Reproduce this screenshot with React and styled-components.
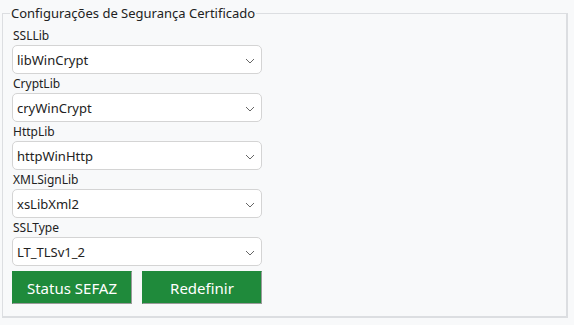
import React from 'react';
import styled, { createGlobalStyle } from 'styled-components';

const GlobalStyle = createGlobalStyle`
  html, body {
    margin: 0;
    padding: 0;
    background: #f8f9fa;
    font-family: "Noto Sans", "Open Sans", sans-serif;
  }
`

const Page = styled.div`
  padding: 6px 6px 0 2px;
  width: 574px;
  height: 325px;
  box-sizing: border-box;
`

const Group = styled.fieldset`
  margin: 0;
  padding: 5px 9px 13px 9px;
  height: 312px;
  box-sizing: border-box;
  border: 1px solid #dcdee1;
  border-right-width: 2px;
  border-bottom-width: 2px;
  background: #f8f9fa;
`

const Legend = styled.legend`
  padding: 0 1px;
  margin-left: -2px;
  font-size: 13px;
  line-height: 15px;
  color: #222;
`

const Field = styled.div`
  width: 250px;
  display: flex;
  flex-direction: column;
`

const Label = styled.label`
  font-size: 12px;
  line-height: 19px;
  height: 19px;
  color: #222;
  padding-left: 1px;
`

const SelectBox = styled.div`
  height: 29px;
  box-sizing: border-box;
  border: 1px solid #d4d4d4;
  border-radius: 5px;
  background: #fff;
  display: flex;
  align-items: center;
  justify-content: space-between;
  padding: 0 6px 0 4px;
  font-size: 13px;
  color: #222;
`

const Chevron = styled.svg`
  width: 10px;
  height: 6px;
  margin-top: 2px;
`

const Actions = styled.div`
  display: flex;
  gap: 10px;
  margin-top: 5px;
`

const Button = styled.button`
  width: 120px;
  height: 33px;
  box-sizing: border-box;
  background: #1f8a3b;
  color: #fff;
  font-family: inherit;
  font-size: 15px;
  border: 1px solid #1f8a3b;
  border-right-color: #9a9a9a;
  border-bottom-color: #9a9a9a;
  padding: 0;
`

const fields = [
  { label: 'SSLLib', value: 'libWinCrypt' },
  { label: 'CryptLib', value: 'cryWinCrypt' },
  { label: 'HttpLib', value: 'httpWinHttp' },
  { label: 'XMLSignLib', value: 'xsLibXml2' },
  { label: 'SSLType', value: 'LT_TLSv1_2' },
]

export default function App() {
  return (
    <Page>
      <GlobalStyle />
      <Group>
        <Legend>Configurações de Segurança Certificado</Legend>
        {fields.map((f) => (
          <Field key={f.label}>
            <Label>{f.label}</Label>
            <SelectBox>
              <span>{f.value}</span>
              <Chevron viewBox="0 0 10 6">
                <path d="M1 1l4 4 4-4" fill="none" stroke="#666" strokeWidth="1" />
              </Chevron>
            </SelectBox>
          </Field>
        ))}
        <Actions>
          <Button>Status SEFAZ</Button>
          <Button>Redefinir</Button>
        </Actions>
      </Group>
    </Page>
  );
}
